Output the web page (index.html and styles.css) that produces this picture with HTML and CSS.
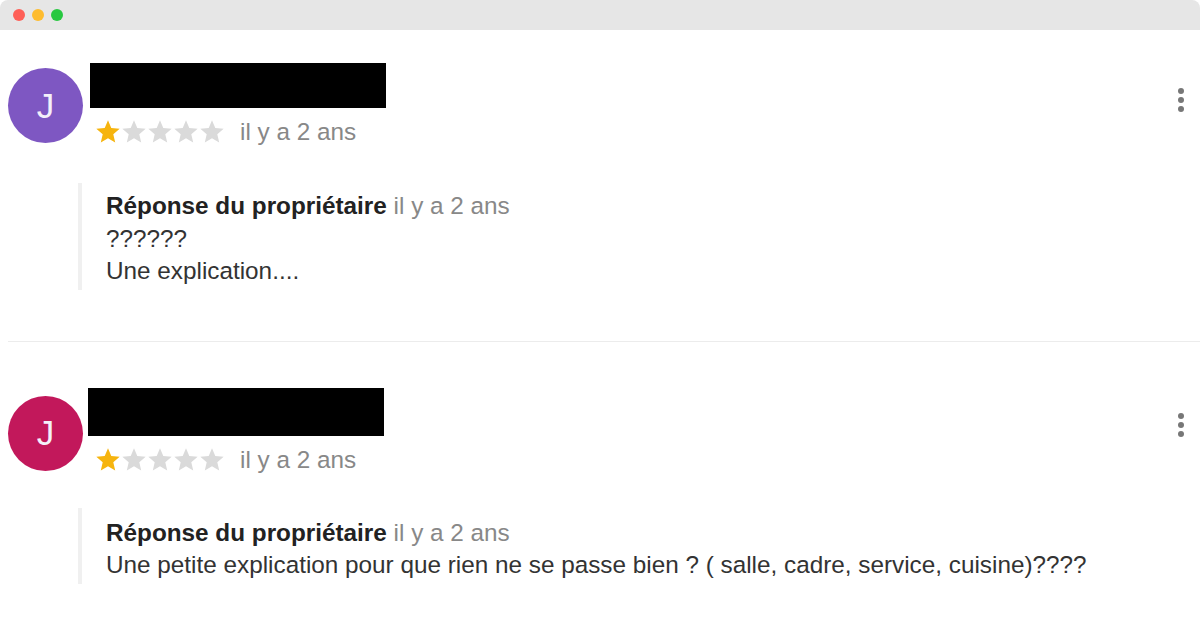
FILE: index.html
```html
<!DOCTYPE html>
<html lang="fr">
  <head>
    <meta charset="UTF-8" />
    <meta name="viewport" content="width=device-width, initial-scale=1.0" />
    <title>Avis</title>
    <link rel="stylesheet" href="styles.css">
  </head>
  <body>
    <div class="fenetre">
      <div class="barre">
        <span class="point rouge"></span>
        <span class="point jaune"></span>
        <span class="point vert"></span>
      </div>

      <section class="avis premier">
        <div class="entete">
          <div class="avatar violet">J</div>
          <div class="infos">
            <div class="nom nom1"></div>
            <div class="note">
              <div class="etoiles">
                <svg class="on" viewBox="0 0 24 24"><path d="M12 17.27L18.18 21l-1.64-7.03L22 9.24l-7.19-.61L12 2 9.19 8.63 2 9.24l5.46 4.73L5.82 21z"/></svg>
                <svg viewBox="0 0 24 24"><path d="M12 17.27L18.18 21l-1.64-7.03L22 9.24l-7.19-.61L12 2 9.19 8.63 2 9.24l5.46 4.73L5.82 21z"/></svg>
                <svg viewBox="0 0 24 24"><path d="M12 17.27L18.18 21l-1.64-7.03L22 9.24l-7.19-.61L12 2 9.19 8.63 2 9.24l5.46 4.73L5.82 21z"/></svg>
                <svg viewBox="0 0 24 24"><path d="M12 17.27L18.18 21l-1.64-7.03L22 9.24l-7.19-.61L12 2 9.19 8.63 2 9.24l5.46 4.73L5.82 21z"/></svg>
                <svg viewBox="0 0 24 24"><path d="M12 17.27L18.18 21l-1.64-7.03L22 9.24l-7.19-.61L12 2 9.19 8.63 2 9.24l5.46 4.73L5.82 21z"/></svg>
              </div>
              <span class="date">il y a 2 ans</span>
            </div>
          </div>
          <div class="menu"><span></span><span></span><span></span></div>
        </div>
        <div class="reponse">
          <p><b>Réponse du propriétaire</b> <span class="date">il y a 2 ans</span></p>
          <p>??????</p>
          <p>Une explication....</p>
        </div>
      </section>

      <section class="avis">
        <div class="entete">
          <div class="avatar rose">J</div>
          <div class="infos">
            <div class="nom nom2"></div>
            <div class="note">
              <div class="etoiles">
                <svg class="on" viewBox="0 0 24 24"><path d="M12 17.27L18.18 21l-1.64-7.03L22 9.24l-7.19-.61L12 2 9.19 8.63 2 9.24l5.46 4.73L5.82 21z"/></svg>
                <svg viewBox="0 0 24 24"><path d="M12 17.27L18.18 21l-1.64-7.03L22 9.24l-7.19-.61L12 2 9.19 8.63 2 9.24l5.46 4.73L5.82 21z"/></svg>
                <svg viewBox="0 0 24 24"><path d="M12 17.27L18.18 21l-1.64-7.03L22 9.24l-7.19-.61L12 2 9.19 8.63 2 9.24l5.46 4.73L5.82 21z"/></svg>
                <svg viewBox="0 0 24 24"><path d="M12 17.27L18.18 21l-1.64-7.03L22 9.24l-7.19-.61L12 2 9.19 8.63 2 9.24l5.46 4.73L5.82 21z"/></svg>
                <svg viewBox="0 0 24 24"><path d="M12 17.27L18.18 21l-1.64-7.03L22 9.24l-7.19-.61L12 2 9.19 8.63 2 9.24l5.46 4.73L5.82 21z"/></svg>
              </div>
              <span class="date">il y a 2 ans</span>
            </div>
          </div>
          <div class="menu"><span></span><span></span><span></span></div>
        </div>
        <div class="reponse court">
          <p><b>Réponse du propriétaire</b> <span class="date">il y a 2 ans</span></p>
          <p>Une petite explication pour que rien ne se passe bien ? ( salle, cadre, service, cuisine)????</p>
        </div>
      </section>
    </div>
  </body>
</html>
```

FILE: styles.css
```css
* {
  box-sizing: border-box;
}
body {
  margin: 0;
  background: #fff;
  font-family: "Liberation Sans", Arial, sans-serif;
  color: #333;
}
.fenetre {
  width: 1200px;
  height: 622px;
  overflow: hidden;
  border-radius: 8px;
  background: #fff;
}
.barre {
  height: 30px;
  background: #e6e6e6;
  display: flex;
  align-items: center;
  gap: 7px;
  padding-left: 13px;
}
.point {
  width: 12px;
  height: 12px;
  border-radius: 50%;
}
.rouge { background: #fe5f57; }
.jaune { background: #febc2e; }
.vert { background: #28c840; }

.avis {
  margin-left: 8px;
  padding-top: 46px;
}
.premier {
  padding-top: 33px;
  padding-bottom: 51px;
  border-bottom: 1px solid #ececec;
}
.entete {
  display: flex;
}
.avatar {
  width: 75px;
  height: 75px;
  border-radius: 50%;
  color: #f4f0fa;
  font-size: 35px;
  display: flex;
  align-items: center;
  justify-content: center;
  margin-top: 5px;
  flex-shrink: 0;
}
.violet { background: #7e57c2; }
.rose { background: #c2185b; margin-top: 8px; }
.infos {
  flex: 1;
  padding-left: 7px;
}
.nom {
  width: 296px;
  height: 45px;
  background: #000;
}
.nom2 {
  height: 48px;
  margin-left: -2px;
}
.note {
  display: flex;
  align-items: center;
  margin-top: 11px;
  height: 26px;
}
.etoiles {
  display: flex;
  margin-left: 4px;
}
.etoiles svg {
  width: 28px;
  height: 28px;
  margin-right: -2px;
  fill: #dadada;
}
.etoiles svg.on {
  fill: #f6b40e;
}
.date {
  color: #888;
  font-size: 24.3px;
}
.note .date {
  margin-left: 16px;
}
.menu {
  display: flex;
  flex-direction: column;
  gap: 3px;
  margin: 25px 16px 0 0;
}
.menu span {
  width: 6px;
  height: 6px;
  border-radius: 50%;
  background: #777;
}
.reponse {
  margin: 38px 0 0 70px;
  border-left: 4px solid #f0f0f0;
  padding: 7px 0 2px 24px;
  font-size: 24.3px;
  line-height: 32.5px;
}
.reponse.court {
  margin-top: 35px;
  padding-top: 9px;
}
.reponse p {
  margin: 0;
}
.reponse b {
  color: #222;
}
```
